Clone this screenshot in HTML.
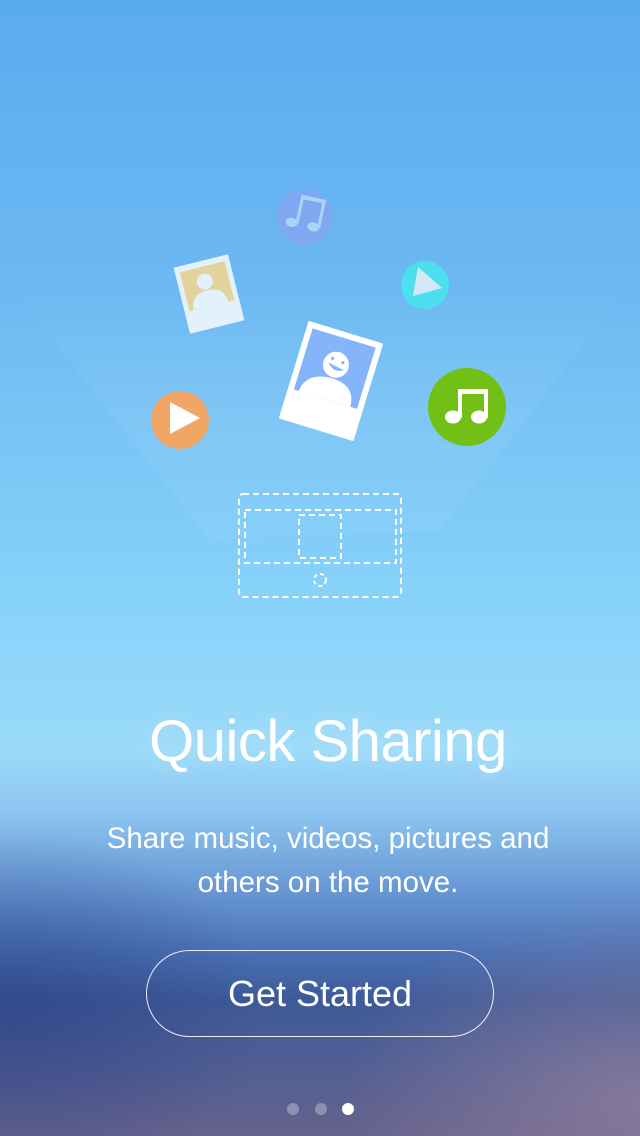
<!DOCTYPE html>
<html><head><meta charset="utf-8"><style>
html,body{margin:0;padding:0}
body{width:640px;height:1136px;position:relative;overflow:hidden;font-family:"Liberation Sans",sans-serif;
background:linear-gradient(180deg,#5aabee 0%,#6cb8f2 25%,#86d2f9 52%,#9adaf9 66%,#8fc8f2 71%,#6a9ad6 78%,#4a70b4 84%,#3e5a98 88%,#4e5e94 93%,#66628c 100%);}
.ov{position:absolute;left:0;top:0;width:640px;height:1136px}
.t{position:absolute;left:0;width:640px;text-align:center;color:#fff}
</style></head><body>
<div class="ov" style="background:radial-gradient(ellipse 260px 180px at 10px 1010px,rgba(40,60,130,0.55),rgba(40,60,130,0) 100%)"></div>
<div class="ov" style="background:radial-gradient(ellipse 300px 200px at 640px 1100px,rgba(150,130,160,0.7),rgba(150,130,160,0) 100%)"></div>
<svg class="ov" width="640" height="1136" viewBox="0 0 640 1136">
<defs><linearGradient id="bm" x1="0" y1="0" x2="0" y2="1"><stop offset="0" stop-color="#fff" stop-opacity="0"/><stop offset="0.5" stop-color="#fff" stop-opacity="0.06"/><stop offset="1" stop-color="#fff" stop-opacity="0.04"/></linearGradient></defs>
<polygon points="10,285 630,285 440,530 210,540" fill="url(#bm)"/>
<!-- small music circle -->
<circle cx="305" cy="217" r="28" fill="#80a8f2"/>
<g fill="#aad4f6" transform="rotate(12 305 217)">
<ellipse cx="293" cy="225" rx="6" ry="4.5"/><ellipse cx="315" cy="225" rx="6" ry="4.5"/>
<rect x="297" y="196" width="3" height="29"/><rect x="319" y="196" width="3" height="29"/>
<rect x="297" y="196" width="25" height="4"/>
</g>
<!-- small photo -->
<g transform="translate(209,294) rotate(-14)">
<rect x="-28" y="-34" width="56" height="68" fill="#e2f1fb"/>
<rect x="-23" y="-28" width="46" height="40" fill="#e2d29c"/>
<circle cx="-1" cy="-13" r="8" fill="#e2f1fb"/>
<path d="M-19 12 Q-18 -4 -1 -4 Q16 -4 17 12 Z" fill="#e2f1fb"/>
</g>
<!-- cyan circle -->
<circle cx="425" cy="285" r="24" fill="#4cdff0"/>
<polygon points="418,267 442,288 413,296" fill="#d4e8f8"/>
<!-- big photo -->
<g transform="translate(331,381) rotate(17)">
<rect x="-39" y="-51" width="78" height="102" fill="#fff" rx="1"/>
<rect x="-33" y="-45" width="66" height="64" fill="#85b4fa"/>
<circle cx="0" cy="-17" r="13" fill="#fff"/>
<path d="M-8 -17 Q0 -8 9 -14 Z" fill="#85b4fa"/>
<circle cx="-5" cy="-22" r="1.6" fill="#85b4fa"/><circle cx="6" cy="-21" r="1.6" fill="#85b4fa"/>
<path d="M-28 19 Q-26 -2 0 -3 Q25 -3 26 19 Z" fill="#fff"/>
</g>
<!-- orange circle -->
<circle cx="180" cy="420" r="29" fill="#f2a665"/>
<polygon points="170,402 200,418 170,434" fill="#fff"/>
<!-- green circle -->
<circle cx="467" cy="407" r="39" fill="#72c016"/>
<g fill="#fff">
<ellipse cx="453" cy="417" rx="8" ry="6.5"/><ellipse cx="479" cy="417" rx="8" ry="6.5"/>
<rect x="458" y="389" width="4" height="29"/><rect x="484" y="389" width="4" height="29"/>
<rect x="458" y="389" width="30" height="5"/>
</g>
<!-- dashed device -->
<g fill="none" stroke="#fff" stroke-width="2" stroke-dasharray="6 4">
<rect x="239" y="494" width="162" height="103" rx="4"/>
<rect x="245" y="510" width="151" height="53"/>
<rect x="299" y="515" width="42" height="43"/>
<circle cx="320" cy="580" r="6" stroke-dasharray="4 3"/>
</g>
</svg>
<div class="t" style="top:708px;left:8px;font-size:58px;font-weight:300;letter-spacing:-0.5px;text-shadow:0 0 20px rgba(255,255,255,0.3)">Quick Sharing</div>
<div class="t" style="top:817px;left:8px;font-size:29.5px;line-height:44px">Share music, videos, pictures and<br>others on the move.</div>
<div style="position:absolute;left:146px;top:950px;width:348px;height:87px;border:1px solid rgba(255,255,255,0.9);border-radius:44px;box-sizing:border-box;color:#fff;font-size:36px;text-align:center;line-height:85px">Get Started</div>
<div style="position:absolute;left:287px;top:1103px;width:12px;height:12px;border-radius:6px;background:rgba(255,255,255,0.3)"></div>
<div style="position:absolute;left:315px;top:1103px;width:12px;height:12px;border-radius:6px;background:rgba(255,255,255,0.3)"></div>
<div style="position:absolute;left:342px;top:1103px;width:12px;height:12px;border-radius:6px;background:#fff"></div>
</body></html>
